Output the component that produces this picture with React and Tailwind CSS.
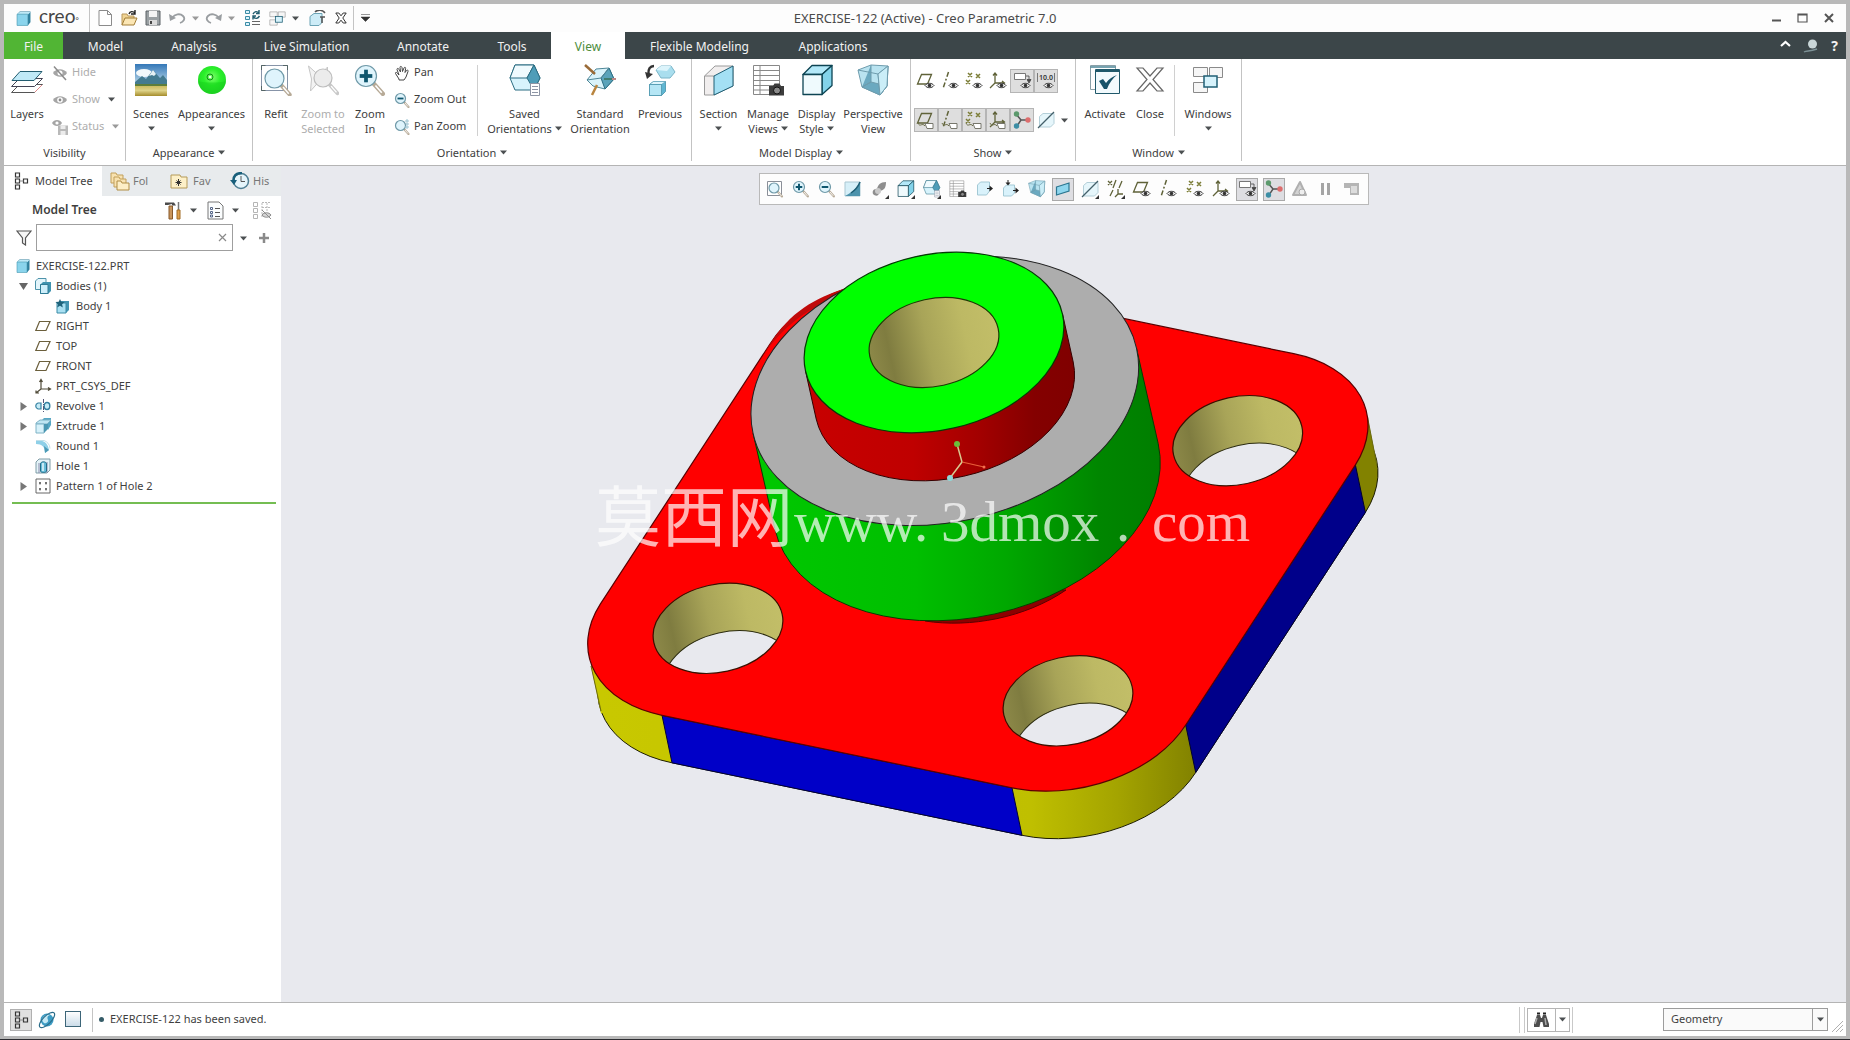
import React from "react";

/* ---------- shared helpers ---------- */

function Svg({ w = 20, h, vb, children }) {
  const hh = h || w;
  return (
    <svg width={w} height={hh} viewBox={vb || `0 0 ${w} ${hh}`} fill="none" className="block shrink-0" aria-hidden="true">
      {children}
    </svg>
  );
}

function Caret({ light }) {
  return (
    <svg width="7" height="5" viewBox="0 0 7 5" className="inline-block shrink-0" aria-hidden="true">
      <path d="M0 .5h7L3.5 4.5z" fill={light ? "#9a9a9a" : "#4c5052"} />
    </svg>
  );
}

const Eye = ({ x = 9, y = 11 }) => (
  <g transform={`translate(${x} ${y})`}>
    <path d="M0 3.5C2 .6 7 .6 9 3.5 7 6.4 2 6.4 0 3.5z" fill="#fff" stroke="#333" />
    <circle cx="4.5" cy="3.5" r="1.8" fill="#333" />
  </g>
);

const Tag = () => (
  <g>
    <path d="M2 13c2 5 4-1 7 3" stroke="#6d6f48" />
    <path d="M9 13.500h8v5H11z" fill="#fff" stroke="#77776c" />
  </g>
);

const Corner = () => <path d="M19 16v4h-4z" fill="#333" />;

/* ---------- small datum icons ---------- */

const olive = "#5f6238";
const PlaneShape = () => <path d="M5.500 3.500h10l-4 9.500h-10z" stroke={olive} strokeWidth="1.300" />;
const AxisShape = () => <path d="M8.500 1L3 17.500" stroke={olive} strokeWidth="1.500" strokeDasharray="5 2 2 2" />;
const PointsShape = () => (
  <path d="M4 2l4 4m0-4L4 6M12 3l4 4m0-4l-4 4M2 9l4 4m0-4l-4 4" stroke="#7b7d36" strokeWidth="1.500" />
);
const CsysShape = () => (
  <path d="M7 2v10h9M7 12l-5 5M5 4.500L7 2l2 2.500M14 10l2.500 2-2.500 2" stroke={olive} strokeWidth="1.300" />
);

const PlaneEye = () => <Svg><PlaneShape /><Eye /></Svg>;
const AxisEye = () => <Svg><AxisShape /><Eye /></Svg>;
const PointsEye = () => <Svg><PointsShape /><Eye /></Svg>;
const CsysEye = () => <Svg><CsysShape /><Eye /></Svg>;
const PlaneTag = () => <Svg><PlaneShape /><Tag /></Svg>;
const AxisTag = () => <Svg><AxisShape /><Tag /></Svg>;
const PointsTag = () => <Svg><PointsShape /><Tag /></Svg>;
const CsysTag = () => <Svg><CsysShape /><Tag /></Svg>;
const NoteEye = () => (
  <Svg>
    <path d="M2.500 2.500h11v6h-11z" fill="#fff" stroke="#777" />
    <path d="M14 5h3v3.500M15 8.500h4L17 12z" stroke="#444" strokeWidth=".8" />
    <path d="M15 8.500h4L17 12z" fill="#444" />
    <Eye />
  </Svg>
);
const DimEye = () => (
  <Svg>
    <path d="M1.500 2v9M18.500 2v9" stroke="#777" />
    <text x="10" y="9" textAnchor="middle" fontSize="7" fontWeight="600" fill="#333">10.0</text>
    <Eye x={8} />
  </Svg>
);
const Spin = () => (
  <Svg>
    <path d="M4 4l5 6 7 0M9 10l-4 6" stroke="#555" strokeWidth="1.500" />
    <circle cx="4.500" cy="4" r="2.700" fill="#5c9a6d" />
    <circle cx="16" cy="10" r="2.700" fill="#dd6d6d" />
    <circle cx="4.500" cy="16" r="2.700" fill="#3c8ea5" />
  </Svg>
);
const SectionLine = ({ corner }) => (
  <Svg>
    <path d="M3.500 6.500L7 3.500h11v10l-3.500 3.500h-11z" fill="#e6f6fb" stroke="#b4cfd8" />
    <path d="M2 18L18 2" stroke="#44606a" strokeWidth="1.300" />
    {corner && <Corner />}
  </Svg>
);

/* ---------- view icons ---------- */

const Lens = ({ x, y, r, sign, gray }) => (
  <g>
    <path d={`M${x + r * 0.7} ${y + r * 0.7}l${r * 0.9} ${r}`} stroke={gray ? "#c8c8c8" : "#b7aa97"} strokeWidth={r * 0.42} strokeLinecap="round" />
    <path d={`M${x + r * 0.9} ${y + r * 0.9}l${r * 0.6} ${r * 0.7}`} stroke="#fff" strokeWidth={r * 0.16} />
    <circle cx={x} cy={y} r={r} fill={gray ? "#ececec" : "#dff4fc"} stroke={gray ? "#bdbdbd" : "#6f99a8"} strokeWidth="1.200" />
    {sign && <path d={`M${x - r * 0.6} ${y}h${r * 1.2}`} stroke="#0e566e" strokeWidth={r * 0.36} />}
    {sign === "+" && <path d={`M${x} ${y - r * 0.6}v${r * 1.2}`} stroke="#0e566e" strokeWidth={r * 0.36} />}
  </g>
);

const RefitBig = () => (
  <Svg w={32}>
    <rect x="1.500" y="1.500" width="26" height="25" fill="#fff" stroke="#8794a8" />
    <path d="M1.500 6v-4.500h4M23 1.500h4.500V6M1.500 22v4.500h4" stroke="#566" />
    <Lens x={14.500} y={14.500} r={9.500} />
  </Svg>
);
const ZoomSelBig = () => (
  <Svg w={32}>
    <path d="M1.500 2l11 10 8-9v18l-8-4-9 10 1-12z" fill="#f3f3f3" stroke="#c6c6c6" />
    <Lens x={16} y={14} r={9} gray />
  </Svg>
);
const ZoomInBig = () => (
  <Svg w={32}>
    <Lens x={12} y={12} r={10.500} sign="+" />
  </Svg>
);
const ZoomSmall = ({ sign }) => (
  <Svg w={16}>
    <Lens x={6.500} y={6.500} r={5} sign={sign} />
  </Svg>
);
const PanZoomIcon = () => (
  <Svg w={16}>
    <Lens x={6.500} y={6.500} r={5} />
    <path d="M11 2h4M12 5h3M11 8h4M13 0v10" stroke="#9cc4d2" />
  </Svg>
);
const HandIcon = () => (
  <Svg w={16}>
    <path d="M5 14L1.500 8.500c-.5-1.500 1.500-1.500 2 0L5 10 3 4.500c0-1.500 1.500-1.500 2 0L6.500 7 6 2.500c0-1.500 1.500-1.500 2 0L8.500 6.500 10 3c.5-1.300 1.900-.8 1.600.5L11 7.500l1.500-2c1-1 2 0 1.500 1L12 12l-2 3H5z" stroke="#444" fill="#fff" />
  </Svg>
);
const LayersBig = () => (
  <Svg w={32}>
    <path d="M8.500 20.500h23l-8 8h-23z" fill="#fff" stroke="#555" />
    <path d="M24 28l7-7" stroke="#d88" />
    <path d="M8.500 14.500h23l-8 8h-23z" fill="#fff" stroke="#445" />
    <path d="M9 7.500h22l-8 9H1z" fill="#bfe9f7" stroke="#235d70" />
  </Svg>
);
const HideIcon = () => (
  <Svg w={16}>
    <path d="M1 8c3-5 11-5 14 0-3 5-11 5-14 0z" fill="#a5a5a5" />
    <circle cx="8" cy="8" r="2.500" fill="#fff" />
    <path d="M2 1.500L14 15" stroke="#8c8c8c" strokeWidth="1.500" />
  </Svg>
);
const ShowIcon = () => (
  <Svg w={16}>
    <path d="M1 8c3-5 11-5 14 0-3 5-11 5-14 0z" fill="#a5a5a5" />
    <circle cx="8" cy="8" r="2.800" fill="#fff" />
    <circle cx="8" cy="8" r="1.400" fill="#8a8a8a" />
  </Svg>
);
const StatusIcon = () => (
  <Svg w={16}>
    <path d="M0 4c2-4 8-4 10 0-2 4-8 4-10 0z" fill="#a5a5a5" />
    <circle cx="5" cy="4" r="1.600" fill="#fff" />
    <path d="M6 6.500h10V16H6z" fill="#b9b9b9" />
    <path d="M8.500 6.500h5V10h-5zM8.500 12h5v4h-5z" fill="#ececec" />
  </Svg>
);
const ScenesBig = () => (
  <Svg w={32}>
    <defs>
      <linearGradient id="sky" x1="0" y1="0" x2="0" y2="1">
        <stop offset="0" stopColor="#3478b8" />
        <stop offset="1" stopColor="#c9e2ee" />
      </linearGradient>
      <linearGradient id="field" x1="0" y1="0" x2="0" y2="1">
        <stop offset="0" stopColor="#c9b755" />
        <stop offset=".5" stopColor="#ded389" />
        <stop offset="1" stopColor="#a58c2c" />
      </linearGradient>
    </defs>
    <rect width="32" height="22" fill="url(#sky)" />
    <ellipse cx="9" cy="9" rx="8" ry="4" fill="#f2f8fb" />
    <path d="M0 18l7-6 4 3 7-9 7 8 3-3 4 5v6H0z" fill="#447b90" />
    <path d="M18 6l-4 6 3-1 2 1 2-2z" fill="#e6f1f4" />
    <rect y="21" width="32" height="11" fill="url(#field)" />
    <path d="M0 20h32v2H0z" fill="#5e7e3a" />
  </Svg>
);
const AppearBig = () => (
  <Svg w={32}>
    <defs>
      <radialGradient id="ball" cx=".5" cy=".4" r=".6">
        <stop offset="0" stopColor="#7dff6a" />
        <stop offset=".5" stopColor="#2af02a" />
        <stop offset="1" stopColor="#22d628" />
      </radialGradient>
    </defs>
    <circle cx="16" cy="16" r="14" fill="url(#ball)" />
    <path d="M2 17c7 2 21 2 28 0-1 8-7 13-14 13S3 25 2 17z" fill="#12c916" opacity=".4" />
    <circle cx="14" cy="13" r="3" stroke="#128c1a" />
    <circle cx="14" cy="13" r="1.300" fill="#eaffea" />
  </Svg>
);
const SavedShape = () => (
  <g strokeLinejoin="round">
    <path d="M6 1h19l6 13-6 12H6L1 14z" fill="#d7f3fc" stroke="#2b6d82" />
    <path d="M6 1h19l-7 13H1z" fill="#effafe" stroke="#2b6d82" />
    <path d="M25 1l6 13-6 12-7-12z" fill="#4f9db8" stroke="#2b6d82" />
    <rect x="21.500" y="19.500" width="9" height="12" fill="#fff" stroke="#8d95a5" />
    <path d="M23 22.500h6M23 25.500h6M23 28.500h6" stroke="#8d95a5" />
  </g>
);
const SavedBig = () => <Svg w={32}><SavedShape /></Svg>;
const StandardBig = () => (
  <Svg w={32}>
    <path d="M3 16l9-11 13-1 5 11-9 10-12-3z" fill="#d9f3fb" stroke="#4f8798" />
    <path d="M25 4l5 11-9 10-4-11z" fill="#5aa3ba" stroke="#2b6d82" />
    <path d="M3 16l14-2 8-10" stroke="#4f8798" />
    <path d="M1 1l10 9" stroke="#9a6b38" strokeWidth="2.500" />
    <path d="M13 21L8 31" stroke="#b9853f" strokeWidth="2.500" />
    <path d="M20 15h9" stroke="#3f7d70" strokeWidth="2" />
    <path d="M28 15h4" stroke="#b88" strokeWidth="2" />
  </Svg>
);
const PreviousBig = () => (
  <Svg w={32}>
    <path d="M10 2C6 2 4 5 4.500 10" stroke="#333" strokeWidth="2.500" />
    <path d="M1 8l2 7 6-5z" fill="#333" />
    <path d="M12 6l5-4 10 0 4 6-5 6-9 0z" fill="#a9deee" stroke="#7ab5c8" />
    <path d="M12 6l5-4 10 0-4 5z" fill="#dcf4fb" />
    <path d="M5.500 20.500l4-3h12v10l-4 4h-12z" fill="#5fb6d2" stroke="#5aa0b6" />
    <path d="M5.500 20.500l4-3h12l-4 3z" fill="#def5fc" stroke="#5aa0b6" strokeWidth=".6" />
    <rect x="5.500" y="20.500" width="12" height="11" fill="#b5e6f5" stroke="#5aa0b6" />
  </Svg>
);
const SectionBig = () => (
  <Svg w={32}>
    <path d="M1.500 12L12 2l18 0v20L11 31H1.500z" fill="#f1eeee" stroke="#9a9a9a" />
    <path d="M1.500 12H11" stroke="#9a9a9a" />
    <path d="M11 12l19-10v20L11 31z" fill="#a4e0f4" stroke="#1f5f75" />
  </Svg>
);
const CamShape = () => (
  <g>
    <path d="M17 22h4l1.500-2.500h5L29 22h3v9.500H17z" fill="#3c3c3c" />
    <circle cx="25" cy="26.500" r="3.500" fill="#8b8b8b" stroke="#111" />
  </g>
);
const ManageShape = () => (
  <g>
    <path d="M1.500 1.500h26v29h-26z" fill="#fff" stroke="#888" />
    <path d="M8 1.500v29M1.500 6.500h26M1.500 11.500h26M1.500 16.500h26M1.500 21.500h26M1.500 26h26" stroke="#888" />
    <CamShape />
  </g>
);
const ManageBig = () => <Svg w={32}><ManageShape /></Svg>;
const BoxShape = () => (
  <g strokeLinejoin="round">
    <path d="M2 10.500L11 1.500h20L21 10.500z" fill="#b3e8f8" stroke="#0d4453" strokeWidth="1.300" />
    <path d="M21 10.500l10-9v20l-10 9z" fill="#83d3ea" stroke="#0d4453" strokeWidth="1.300" />
    <path d="M2 10.500h19v20H2z" fill="#effafd" stroke="#0d4453" strokeWidth="1.300" />
  </g>
);
const DisplayBig = () => <Svg w={32}><BoxShape /></Svg>;
const PerspShape = () => (
  <g>
    <path d="M1 6l13-5 17 1-1 20-7 9-18-8z" fill="#b9e3f0" stroke="#6e9cad" />
    <path d="M14 1v17L5 23M14 18l16 4-7 9-18-8z" fill="#6ba9c0" stroke="#6e9cad" />
    <path d="M1 6l20 4 10-8-1 20-7 9-2-21" stroke="#6e9cad" />
    <path d="M21 10l10-8-1 20-7 9z" fill="#cbeef8" stroke="#6e9cad" />
  </g>
);
const PerspBig = () => <Svg w={32}><PerspShape /></Svg>;
const ActivateBig = () => (
  <Svg w={32}>
    <path d="M1.500 1.500h25v24h-25z" fill="#fff" stroke="#8aa0a8" />
    <path d="M1.500 3h25" stroke="#4a8496" strokeWidth="1.500" />
    <path d="M6.500 5.500h24v24h-24z" fill="#f2fafd" stroke="#20596b" />
    <path d="M6.500 7h24" stroke="#20596b" strokeWidth="2" />
    <path d="M10 17l4-2 3 4c3-4 6-6 11-8-4 3-8 8-10 14h-3z" fill="#17536a" />
  </Svg>
);
const CloseBig = () => (
  <Svg w={32}>
    <path d="M3 4h6l7 8 7-8h6L19 15.500 29 27h-6l-7-8-7 8H3l10-11.500z" fill="#fff" stroke="#666" strokeWidth="1.200" />
  </Svg>
);
const WindowsShape = () => (
  <g>
    <path d="M1.500 3.500h14v9h-14zM17.500 3.500h13v10h-13zM1.500 18.500h14v10h-14z" fill="#f6f6f6" stroke="#8a8a8a" />
    <rect x="12" y="12" width="13" height="11" fill="#d6f2fb" stroke="#1f5f75" strokeWidth="1.500" />
  </g>
);
const WindowsBig = () => <Svg w={32}><WindowsShape /></Svg>;

/* ---------- title bar icons ---------- */

const CubeIcon = ({ s = 14 }) => (
  <Svg w={s} vb="0 0 14 14">
    <path d="M1 3l2.500-2.500h10v10L11 13.500V3z" fill="#2f7f9c" />
    <path d="M1 3l2.500-2h10L11 3.500z" fill="#bfeaf7" />
    <path d="M1 3h10v10.500H1z" fill="#8ad4ec" stroke="#4597b1" strokeWidth=".6" />
  </Svg>
);
const NewIcon = () => (
  <Svg w={16}>
    <path d="M2 .5h8.500l4 4v11H2z" fill="#fff" stroke="#8b8b8b" />
    <path d="M10.500.5v4h4" stroke="#8b8b8b" />
  </Svg>
);
const OpenIcon = () => (
  <Svg w={17} h={17}>
    <path d="M1 15V4h5l1 2h6v3" fill="#f0d494" stroke="#b9975a" />
    <path d="M1 15l3-7h12l-3 7z" fill="#fbe6b4" stroke="#a17d36" />
    <path d="M8 4c1-3 4-3 6-1M14 0v4h-4" stroke="#222" strokeWidth="1.400" />
  </Svg>
);
const SaveIcon = () => (
  <Svg w={16}>
    <path d="M1 1h14v14H1z" fill="#9aa0a3" stroke="#5d6366" />
    <path d="M4 1h8v6H4z" fill="#f4f4f4" />
    <path d="M4 10h8v5H4z" fill="#dadada" />
    <path d="M6 11v3" stroke="#444" strokeWidth="2" />
  </Svg>
);
const UndoIcon = ({ flip }) => (
  <svg width="17" height="12" viewBox="0 0 17 12" fill="none" className={flip ? "-scale-x-100" : ""} aria-hidden="true">
    <path d="M3 6c3-4 8-5 11-2s0 6-3 7" stroke="#9a9ea1" strokeWidth="1.800" />
    <path d="M0 2l1 7 6-3z" fill="#9a9ea1" />
  </svg>
);
const RegenIcon = () => (
  <Svg w={16}>
    <path d="M.5.500h4v3h-4zM.5 6.500h4v3h-4zM.5 12.500h4v3h-4z" fill="#d9f2fb" stroke="#3a8ba5" />
    <path d="M7 11.500h8M7 14.500h8" stroke="#666" />
    <path d="M8 4c2-3 4-3 6-1M14 0v3.500h-3M14.500 6c-2 3-4 3-6 1M8 9.500V6h3" stroke="#225e70" strokeWidth="1.400" />
  </Svg>
);
const CloseCube = () => (
  <Svg w={17} h={16}>
    <path d="M1 6.500l4-3h8v9l-3 3H1z" fill="#cdecf7" stroke="#6ba3b5" />
    <path d="M6 2c3-3 8-2 10 1M16 7h-5M13 7v6" stroke="#555" strokeWidth="1.500" />
  </Svg>
);
const XSmall = () => (
  <Svg w={12}>
    <path d="M.8 1h3L6 3.800 8.200 1h3L7.800 6l3.400 5h-3L6 8.200 3.800 11h-3L4.200 6z" stroke="#333" />
  </Svg>
);

function TitleBar() {
  const ib = "flex h-5 w-6 items-center justify-center";
  const cb = "flex h-5 w-3 items-center justify-center";
  return (
    <header className="grid h-7 grid-cols-[1fr_auto_1fr] items-center bg-[#fdfdfd]">
      <div className="flex items-center">
        <span className="flex w-[86px] shrink-0 items-center gap-2 border-r border-[#c4c4c4] pl-3">
          <CubeIcon s={15} />
          <span className="font-['Lato',sans-serif] text-[19px] leading-6 text-[#454545]">creo<span className="text-[8px]">°</span></span>
        </span>
        <span className="flex items-center pl-[3px]">
          <button className={ib} aria-label="New"><NewIcon /></button>
          <button className={ib} aria-label="Open"><OpenIcon /></button>
          <button className={ib} aria-label="Save"><SaveIcon /></button>
          <button className={ib} aria-label="Undo"><UndoIcon /></button>
          <button className={cb} aria-label="Undo list"><Caret light /></button>
          <button className={ib} aria-label="Redo"><UndoIcon flip /></button>
          <button className={cb} aria-label="Redo list"><Caret light /></button>
          <button className="ml-1 flex h-5 w-6 items-center justify-center" aria-label="Regenerate"><RegenIcon /></button>
          <button className={ib} aria-label="Windows"><Svg w={17} vb="0 0 32 32"><WindowsShape /></Svg></button>
          <button className={cb} aria-label="Windows list"><Caret /></button>
          <button className="ml-1 flex h-5 w-6 items-center justify-center" aria-label="Erase"><CloseCube /></button>
          <button className={ib} aria-label="Close model"><XSmall /></button>
          <button className="flex h-6 w-6 items-center justify-center border-l border-[#c4c4c4]" aria-label="Customize"><Svg w={9} h={8}><path d="M0 .5h9M0 3h9L4.500 7.500z" stroke="#333" strokeWidth=".5" fill="#333" /></Svg></button>
        </span>
      </div>
      <h1 className="text-[13px] leading-5 text-[#4a4a4a]">EXERCISE-122 (Active) - Creo Parametric 7.0</h1>
      <div className="flex items-center justify-end gap-4 pr-3">
        <button aria-label="Minimize"><Svg w={10}><path d="M1 7.500h9" stroke="#555" strokeWidth="2" /></Svg></button>
        <button aria-label="Maximize"><Svg w={11} h={10}><path d="M1 1h9v8H1zM1 2h9" stroke="#555" strokeWidth="1.200" /></Svg></button>
        <button aria-label="Close"><Svg w={10}><path d="M1 1l8 8M9 1L1 9" stroke="#555" strokeWidth="2" /></Svg></button>
      </div>
    </header>
  );
}

const TABS = [
  ["Model", "w-[85px]"],
  ["Analysis", "w-[92px]"],
  ["Live Simulation", "w-[133px]"],
  ["Annotate", "w-[100px]"],
  ["Tools", "w-[78px]"],
  ["View", "w-[74px]"],
  ["Flexible Modeling", "w-[149px]"],
  ["Applications", "w-[118px]"],
];

function TabBar() {
  return (
    <nav className="flex h-[27px] items-stretch bg-[#3c4649] text-[12px] text-[#f2f2f2]">
      <button className="w-[59px] bg-[#51b534] pt-[2px]">File</button>
      {TABS.map(([t, w]) => (
        <button key={t} className={`${w} whitespace-nowrap pt-[2px] ${t === "View" ? "bg-white text-[#4d8d3c]" : ""}`}>{t}</button>
      ))}
      <div className="ml-auto flex items-center gap-3 pr-2">
        <button aria-label="Collapse ribbon"><Svg w={11} h={12}><path d="M1 6l4.500-4L10 6" stroke="#fff" strokeWidth="2.200" /></Svg></button>
        <button aria-label="Search"><Svg w={16} h={14}><circle cx="9.500" cy="5" r="4.500" fill="#c9d6d8" /><path d="M1 13c3-2 5 0 13-3" stroke="#7d9297" strokeWidth="1.500" /></Svg></button>
        <button className="text-[14px] font-bold" aria-label="Help">?</button>
      </div>
    </nav>
  );
}

/* ---------- ribbon ---------- */

function Big({ icon, l1, l2, caret, w, off }) {
  return (
    <button className={`flex ${w} shrink-0 flex-col items-center whitespace-nowrap pt-[5px] ${off ? "text-[#adadad]" : ""}`}>
      {icon}
      <span className="mt-[10px] leading-[15px]">{l1}</span>
      <span className="flex h-[15px] items-center gap-[3px] leading-[15px]">
        {l2}
        {caret && <Caret />}
      </span>
    </button>
  );
}

function Small({ icon, label, caret, off }) {
  return (
    <button className={`flex h-[27px] items-center gap-1 whitespace-nowrap ${off ? "text-[#adadad]" : ""}`}>
      {icon}
      <span>{label}</span>
      {caret && <span className="flex pl-1"><Caret light={caret === "light"} /></span>}
    </button>
  );
}

function Group({ label, caret, w, children }) {
  return (
    <section className={`${w} flex h-full shrink-0 flex-col pb-1`}>
      <div className="flex h-full flex-col border-r border-[#c3c3c3]">
        <div className="flex h-[84px]">{children}</div>
        <div className="flex flex-1 items-center justify-center gap-1 pt-[3px]">
          {label}
          {caret && <Caret />}
        </div>
      </div>
    </section>
  );
}

function Cell({ on, label, children }) {
  return (
    <button aria-label={label} className={`flex h-6 w-6 items-center justify-center ${on ? "border border-[#b5b5b5] bg-[#dedede]" : ""}`}>
      {children}
    </button>
  );
}

const Sep = () => <div className="my-[6px] w-px shrink-0 bg-[#d0d0d0]" />;

function Ribbon() {
  return (
    <div className="flex h-[107px] border-b border-[#b4b4b4] bg-white text-[11px] text-[#3d3d3d]">
      <Group label="Visibility" w="w-[122px]">
        <Big w="w-[46px]" icon={<LayersBig />} l1="Layers" />
        <div className="flex flex-col pl-[2px]">
          <Small off icon={<HideIcon />} label="Hide" />
          <Small off icon={<ShowIcon />} label="Show" caret="dark" />
          <Small off icon={<StatusIcon />} label="Status" caret="light" />
        </div>
      </Group>
      <Group label="Appearance" caret w="w-[127px]">
        <Big w="w-[50px]" icon={<ScenesBig />} l1="Scenes" caret />
        <Big w="w-[71px]" icon={<AppearBig />} l1="Appearances" caret />
      </Group>
      <Group label="Orientation" caret w="w-[439px]">
        <Big w="w-[46px]" icon={<RefitBig />} l1="Refit" />
        <Big w="w-[48px]" off icon={<ZoomSelBig />} l1="Zoom to" l2="Selected" />
        <Big w="w-[46px]" icon={<ZoomInBig />} l1="Zoom" l2="In" />
        <div className="flex w-[85px] flex-col pl-[1px]">
          <Small icon={<HandIcon />} label="Pan" />
          <Small icon={<ZoomSmall sign="-" />} label="Zoom Out" />
          <Small icon={<PanZoomIcon />} label="Pan Zoom" />
        </div>
        <Sep />
        <Big w="w-[93px]" icon={<SavedBig />} l1="Saved" l2="Orientations" caret />
        <Big w="w-[58px]" icon={<StandardBig />} l1="Standard" l2="Orientation" />
        <Big w="w-[62px]" icon={<PreviousBig />} l1="Previous" />
      </Group>
      <Group label="Model Display" caret w="w-[219px]">
        <Big w="w-[53px]" icon={<SectionBig />} l1="Section" caret />
        <Big w="w-[46px]" icon={<ManageBig />} l1="Manage" l2="Views" caret />
        <Big w="w-[51px]" icon={<DisplayBig />} l1="Display" l2="Style" caret />
        <Big w="w-[62px]" icon={<PerspBig />} l1="Perspective" l2="View" />
      </Group>
      <Group label="Show" caret w="w-[165px]">
        <div className="flex flex-col gap-[15px] pl-[3px] pt-[10px]">
          <div className="flex">
            <Cell label="Plane display"><PlaneEye /></Cell>
            <Cell label="Axis display"><AxisEye /></Cell>
            <Cell label="Point display"><PointsEye /></Cell>
            <Cell label="Csys display"><CsysEye /></Cell>
            <Cell on label="Annotation display"><NoteEye /></Cell>
            <Cell on label="Dimension display"><DimEye /></Cell>
          </div>
          <div className="flex items-center">
            <Cell on label="Plane tags"><PlaneTag /></Cell>
            <Cell on label="Axis tags"><AxisTag /></Cell>
            <Cell on label="Point tags"><PointsTag /></Cell>
            <Cell on label="Csys tags"><CsysTag /></Cell>
            <Cell on label="Spin center"><Spin /></Cell>
            <Cell label="Section line"><SectionLine /></Cell>
            <button className="pl-[3px]" aria-label="More"><Caret /></button>
          </div>
        </div>
      </Group>
      <Group label="Window" caret w="w-[166px]">
        <Big w="w-[58px]" icon={<ActivateBig />} l1="Activate" />
        <Big w="w-[32px]" icon={<CloseBig />} l1="Close" />
        <div className="w-[9px]" />
        <Sep />
        <Big w="w-[66px]" icon={<WindowsBig />} l1="Windows" caret />
      </Group>
    </div>
  );
}

/* ---------- model tree ---------- */

const TreeTabIcon = () => (
  <Svg w={15} h={18}>
    <path d="M1.500 1h4v4h-4zM1.500 7h4v4h-4zM1.500 13h4v4h-4zM9.500 7h4v4h-4z" stroke="#333" strokeWidth="1.200" />
    <path d="M3.500 5v2M3.500 11v2M5.500 9h4" stroke="#888" />
  </Svg>
);
const FoldersIcon = () => (
  <Svg w={20} h={19}>
    <path d="M1 1h5l1 2h6v8H1z" fill="#f8e2b0" stroke="#c19f5a" />
    <path d="M4 5h5l1 2h6v8H4z" fill="#f8e2b0" stroke="#c19f5a" />
    <path d="M7 9h4l1 2h7v7H7z" fill="#fdeec6" stroke="#b08d45" />
  </Svg>
);
const FavIcon = () => (
  <Svg w={18} h={17}>
    <path d="M1 2h9l1 2h6v11H1z" fill="#fdf0c8" stroke="#b59a58" />
    <path d="M8.500 6v7M5.500 9.500h6M6.500 7.500l4 4M10.500 7.500l-4 4" stroke="#333" />
  </Svg>
);
const HistIcon = () => (
  <Svg w={20} h={18}>
    <circle cx="11" cy="9" r="7.500" fill="#e6f5fb" stroke="#4e7e93" strokeWidth="1.500" />
    <path d="M11 4v5.500h4" stroke="#555" />
    <path d="M12 1C6 1 3 4 3.500 9.500" stroke="#185f7b" strokeWidth="2.500" />
    <path d="M0 8h7l-3 5z" fill="#185f7b" />
  </Svg>
);
const ToolsIcon = () => (
  <Svg w={18} h={19}>
    <path d="M1 1.500h9l2 3H8V3L4 4H1z" fill="#4b4b4b" />
    <path d="M5 5h3.500v13H5z" fill="#c9955b" stroke="#87592a" />
    <path d="M14.500 1v8" stroke="#777" strokeWidth="1.500" />
    <path d="M13 9h3v9h-3z" fill="#e0a04c" stroke="#a16d24" />
  </Svg>
);
const ListIcon = () => (
  <Svg w={17} h={19}>
    <path d="M1 1h11l4 4v13H1z" fill="#fbfdfe" stroke="#777" />
    <path d="M3.500 6.500h2v2h-2zM3.500 10.500h2v2h-2zM3.500 14h2v2h-2z" stroke="#568" />
    <path d="M8 7.500h5M8 11.500h5M8 15.500h5" stroke="#555" />
  </Svg>
);
const GridHide = () => (
  <Svg w={20} h={19}>
    <path d="M1.500 1.500h4v4h-4zM1.500 7.500h4v4h-4zM1.500 13.500h4v4h-4z" stroke="#b5b5b5" />
    <path d="M10 2v14M10 1.500h9M10 6.500h9M15 2v8" stroke="#b9b9b9" strokeDasharray="2 1" />
    <path d="M10 14c2-3 7-3 9 0-2 3-7 3-9 0zM10 9l9 9" stroke="#8d8d8d" fill="#d5d5d5" />
  </Svg>
);
const BodiesIcon = () => (
  <Svg w={16}>
    <path d="M.5 3L3 .5h8V9L8.500 11.500h-8z" fill="#e3f5fb" stroke="#4e93aa" />
    <path d="M5 7l3-3h8v9l-3 3H5z" fill="#3f93af" />
    <path d="M5.500 6.500h7.500v9H5.500z" fill="#cdeefa" stroke="#2f7b95" />
  </Svg>
);
const BodyIcon = () => (
  <Svg w={15} h={15}>
    <path d="M2 5l3-3h9v9l-3 3H2z" fill="#4295b2" />
    <path d="M2 4h9v10H2z" fill="#a9e0f2" stroke="#3b8ba6" />
    <path d="M5 0l1.300 2.800 3.200.3-2.400 2.100.7 3.200L5 6.700 2.200 8.400l.7-3.200L.5 3.100l3.200-.3z" fill="#1f637b" />
  </Svg>
);
const PlaneIcon = () => (
  <Svg w={16} h={12}>
    <path d="M4.500 1.500h10.500l-4 9H.8z" stroke="#6b5f3c" strokeWidth="1.200" />
  </Svg>
);
const CsysIcon = () => (
  <Svg w={17} h={17}>
    <path d="M6 2v9h9M6 11l-5 4M4.500 4L6 1.500 7.500 4M13 9.500l2.500 1.500-2.500 1.500M1 12.500V15h3" stroke="#4f4a38" strokeWidth="1.200" />
  </Svg>
);
const RevolveIcon = () => (
  <Svg w={16}>
    <path d="M6 5H3C0 6 0 10 3 11h3z" fill="#c5ebf7" stroke="#3480a0" strokeWidth="1.200" />
    <ellipse cx="12" cy="8" rx="2.800" ry="3.500" fill="#c5ebf7" stroke="#3480a0" strokeWidth="1.400" />
    <path d="M8.500 1v14" stroke="#557" strokeDasharray="4 1 1 1" />
  </Svg>
);
const ExtrudeIcon = () => (
  <Svg w={16}>
    <path d="M6 3l3-3h7v7l-3 5V4z" fill="#56a7c4" />
    <path d="M1 5l4-3h11l-4 4H1z" fill="#bfe6f3" stroke="#7fb3c6" />
    <path d="M1 6h8v9H1z" fill="#d7f1fa" stroke="#7fb3c6" />
    <path d="M9 6h4v5l-4 4z" fill="#4a97b2" />
  </Svg>
);
const RoundIcon = () => (
  <Svg w={16}>
    <path d="M1 3c7-2 12 2 13 9l-4 3C10 9 7 6 1 6z" fill="#8fd0e8" />
    <path d="M1 2.500h8c3 1 6 4 6 8" stroke="#c1dfe9" />
    <path d="M9 8l5 4-4 3z" fill="#4c9ab6" />
  </Svg>
);
const HoleIcon = () => (
  <Svg w={16}>
    <path d="M1 4l3-3h11v11l-3 3H1z" fill="#e4f3f8" stroke="#7f9ca6" />
    <path d="M4 5v10M12 4v11" stroke="#88a" />
    <path d="M5.500 6c0-3 6-3 6 0v7c0 2-6 2-6 0z" fill="#67bcd9" stroke="#236d88" />
    <path d="M8 5v8" stroke="#e9f8fd" strokeWidth="1.500" />
  </Svg>
);
const PatternIcon = () => (
  <Svg w={16}>
    <path d="M1 1h14v14H1z" fill="#fff" stroke="#666" />
    <path d="M4 5h2M10 5h2M4 11h2M10 11h2M5 4v2.500M11 4v2.500M5 10v2.500M11 10v2.500" stroke="#444" />
  </Svg>
);
const Twist = ({ open }) => (
  <Svg w={9} h={9}>
    {open ? <path d="M0 1h9L4.500 8z" fill="#666" /> : <path d="M1.500 0v9L8 4.500z" fill="#777" />}
  </Svg>
);

const TREE = [
  ["Bodies (1)", BodiesIcon, "open"],
  ["Body 1", BodyIcon, "", true],
  ["RIGHT", PlaneIcon],
  ["TOP", PlaneIcon],
  ["FRONT", PlaneIcon],
  ["PRT_CSYS_DEF", CsysIcon],
  ["Revolve 1", RevolveIcon, "closed"],
  ["Extrude 1", ExtrudeIcon, "closed"],
  ["Round 1", RoundIcon],
  ["Hole 1", HoleIcon],
  ["Pattern 1 of Hole 2", PatternIcon, "closed"],
];

function SidePanel() {
  const tab = "flex h-[30px] shrink-0 items-center whitespace-nowrap";
  return (
    <aside className="flex w-[277px] shrink-0 flex-col bg-white text-[11px] text-[#3f3f3f]">
      <div className="flex bg-[#e8ebed]">
        <button className={`${tab} w-[98px] gap-[6px] bg-white pl-[10px]`}><TreeTabIcon />Model Tree</button>
        <button className={`${tab} w-[60px] gap-[3px] pl-2 text-[#777]`}><FoldersIcon />Fol</button>
        <button className={`${tab} w-[60px] gap-[5px] pl-2 text-[#777]`}><FavIcon />Fav</button>
        <button className={`${tab} w-[52px] gap-[3px] pl-2 text-[#777]`}><HistIcon />His</button>
      </div>
      <div className="flex h-7 items-center pl-7">
        <h2 className="flex-1 text-[12px] font-semibold">Model Tree</h2>
        <button aria-label="Tree settings"><ToolsIcon /></button>
        <button className="ml-2" aria-label="Settings list"><Caret /></button>
        <button className="ml-[10px]" aria-label="Tree show"><ListIcon /></button>
        <button className="ml-2" aria-label="Show list"><Caret /></button>
        <button className="ml-[13px] mr-[9px]" aria-label="Tree columns"><GridHide /></button>
      </div>
      <div className="flex h-[27px] items-center pl-3">
        <Svg w={16} h={16}><path d="M1 1h14L9.500 8v7l-3-2V8z" fill="#f5f5f5" stroke="#555" strokeWidth="1.200" /></Svg>
        <div className="ml-1 flex h-[27px] w-[197px] items-center border border-[#9f9f9f] bg-white">
          <input aria-label="Filter tree" className="h-full min-w-0 flex-1 px-1 outline-none" />
          <button className="mr-[5px]" aria-label="Clear filter"><Svg w={9}><path d="M1 1l7 7M8 1L1 8" stroke="#8a8a8a" strokeWidth="1.200" /></Svg></button>
        </div>
        <button className="ml-[7px]" aria-label="Filter list"><Caret /></button>
        <button className="ml-[11px]" aria-label="Add filter"><Svg w={12}><path d="M6 1v10M1 6h10" stroke="#8a8a8a" strokeWidth="2.500" /></Svg></button>
      </div>
      <ul className="pl-2 pr-[5px] pt-[5px]">
        <li className="flex h-5 items-center gap-[6px] pl-1"><CubeIcon s={14} />EXERCISE-122.PRT</li>
        {TREE.map(([name, Icon, tw, deep]) => (
          <li key={name} className={`flex h-5 items-center whitespace-nowrap ${deep ? "pl-[27px]" : "pl-[7px]"}`}>
            <span className="w-4 shrink-0">{tw && <Twist open={tw === "open"} />}</span>
            <span className="flex w-[21px] shrink-0 items-center"><Icon /></span>
            {name}
          </li>
        ))}
        <li className="mt-[6px] h-[2px] bg-[#74bd52]" />
      </ul>
    </aside>
  );
}

/* ---------- in-graphics toolbar ---------- */

const mini = (shape, corner) => (
  <Svg w={20} vb="0 0 20 20">
    <g transform="translate(1 1) scale(.54)">{shape}</g>
    {corner && <Corner />}
  </Svg>
);

const TOOLS = [
  ["Refit", <Svg><path d="M2.500 2.500h14v14h-14z" stroke="#8a8f98" fill="#fff" /><Lens x={9} y={9} r={5} /></Svg>],
  ["Zoom in", <Svg><Lens x={8} y={8} r={5.500} sign="+" /></Svg>],
  ["Zoom out", <Svg><Lens x={8} y={8} r={5.500} sign="-" /></Svg>],
  ["Repaint", <Svg><path d="M2 3h15v14H2z" fill="#d6eff8" stroke="#a9c7d2" /><path d="M17 3v14H2C8 14 13 10 17 3z" fill="#4d93ac" /><path d="M17 3C15 8 11 12 8 14" stroke="#1f5f75" strokeWidth="1.500" /></Svg>],
  ["Rendering", <Svg><path d="M3 15c-1-4 1-5 4-5 1-4 3-7 9-7 0 6-2 8-6 9-1 5-4 6-7 3z" fill="#8e8e8e" /><circle cx="8" cy="12" r="3" fill="#c9c9c9" /><Corner /></Svg>],
  ["Display style", mini(<BoxShape />, true)],
  ["Saved orientations", mini(<SavedShape />, true)],
  ["View manager", mini(<ManageShape />)],
  ["View normal", <Svg><path d="M2.500 6l3-3h9v9l-3 4h-9z" fill="#d9f2fb" stroke="#a3c9d5" /><path d="M12 9.500h3" stroke="#222" /><path d="M14.500 6.500l3.500 3-3.500 3z" fill="#222" /></Svg>],
  ["Previous view", <Svg><path d="M2.500 9l3-3h8v8l-3 3h-8z" fill="#d9f2fb" stroke="#a3c9d5" /><path d="M12 11.500h3M7 1v3" stroke="#222" /><path d="M14.500 8.500l3.500 3-3.500 3zM4.500 3.500h5L7 6.500z" fill="#222" /></Svg>],
  ["Perspective", mini(<PerspShape />)],
  ["Section", <Svg><path d="M3.500 8L16 4v8L3.500 16z" fill="#8ed6ee" stroke="#2b7690" strokeWidth="1.200" /></Svg>, true],
  ["Section line", <SectionLine corner />],
  ["Datum filters", <Svg><path d="M2 2l4 4m0-4L2 6M10 1l-3 8M16 2l-3 7M7 11l-3 6M12 10v5h5M12 15l-3 3" stroke={olive} strokeWidth="1.300" /><Corner /></Svg>],
  ["Planes", <PlaneEye />],
  ["Axes", <AxisEye />],
  ["Points", <PointsEye />],
  ["Coordinate systems", <CsysEye />],
  ["Annotations", <NoteEye />, true],
  ["Spin center", <Spin />, true],
  ["Simulate", <Svg><path d="M10 3l6 13H3z" fill="#d3d3d3" stroke="#b0b0b0" strokeWidth="2" strokeLinejoin="round" /><circle cx="12" cy="13" r="3" fill="#eee" stroke="#aaa" /></Svg>],
  ["Pause", <Svg><path d="M6.500 4v12M12.500 4v12" stroke="#a5a5a5" strokeWidth="3" /></Svg>],
  ["Stop", <Svg><path d="M2 4h15v12H8V9H2z" fill="#b5b5b5" /><path d="M9 7h6v7H9z" fill="#dcdcdc" /></Svg>],
];

function GraphicsToolbar() {
  return (
    <div className="relative flex h-8 w-[610px] items-center justify-between border border-[#b9b9b9] bg-[#fdfdfd] px-1">
      {TOOLS.map(([n, icon, on]) => (
        <button key={n} aria-label={n} className={`flex h-[23px] w-[22px] items-center justify-center ${on ? "border border-[#a9a9a9] bg-[#dedee2]" : ""}`}>
          {icon}
        </button>
      ))}
    </div>
  );
}

/* ---------- 3D part ---------- */

const PLATE =
  "M600.3 604.1L770 344A131.6 87.800 -12.500 0 1 943.7 281.2L1293.7 353.7A131.6 87.800 -12.500 0 1 1355.4 464.9L1185.7 725A131.6 87.800 -12.500 0 1 1012 787.8L662 715.3A131.6 87.800 -12.500 0 1 600.3 604.1Z";

function Disc({ x, y, r, ...rest }) {
  return <ellipse rx={r} ry={r * 0.667} transform={`translate(${x} ${y}) rotate(-12.5)`} {...rest} />;
}

const HOLES = [
  [1237.7, 440.7],
  [718, 628.3],
  [1068, 700.8],
];

function Grad({ id, x1, x2, stops }) {
  return (
    <linearGradient id={id} gradientUnits="userSpaceOnUse" x1={x1} x2={x2} y1="0" y2="0">
      {stops.map(([o, c]) => <stop key={o} offset={o} stopColor={c} />)}
    </linearGradient>
  );
}

const TAN = [[0, "#8c8848"], [0.15, "#7f7c40"], [0.45, "#a8a458"], [0.75, "#bdb964"], [1, "#c2be68"]];

function Part() {
  return (
    <svg className="absolute inset-0 h-full w-full" viewBox="281 166 1565 836" fill="none" role="img" aria-label="Flanged part">
      <defs>
        <Grad id="yl" x1={600} x2={1380} stops={[[0, "#c8c800"], [0.54, "#bfbf00"], [0.65, "#a4a400"], [0.75, "#828200"], [1, "#828200"]]} />
        <Grad id="gr" x1={753} x2={1160} stops={[[0, "#00c800"], [0.4, "#00bf00"], [0.62, "#00a800"], [0.85, "#008600"], [1, "#007e00"]]} />
        <Grad id="rd" x1={805} x2={1075} stops={[[0, "#c80000"], [0.4, "#bf0000"], [0.65, "#a20000"], [0.85, "#840000"], [1, "#800000"]]} />
        <Grad id="bore" x1={-65} x2={65} stops={TAN} />
        {HOLES.map(([x, y], i) => (
          <clipPath key={i} id={`hc${i}`}><Disc x={x} y={y} r={65.700} /></clipPath>
        ))}
      </defs>

      <path d={PLATE} transform="translate(10 47.500)" fill="url(#yl)" stroke="#1c1c00" />
      <path d="M591 666L601 713.500L1377 464L1367.500 417Z" fill="url(#yl)" />
      <path d="M591 666L601 711M1377 466L1367.500 417" stroke="#6a6a10" />
      <path d="M662 715.300L672 762.800L1022 835.300L1012 787.800Z" fill="#0000c8" stroke="#00003a" />
      <path d="M1185.700 725L1195.700 772.500L1365.400 512.400L1355.400 464.900Z" fill="#00008a" stroke="#000030" />
      <path d={PLATE} fill="#ff0000" stroke="#5a0000" strokeWidth="1.200" />

      {HOLES.map(([x, y], i) => (
        <g key={i}>
          <Disc x={x} y={y} r={65.700} fill="url(#bore)" />
          <g clipPath={`url(#hc${i})`}>
            <Disc x={x + 10} y={y + 47.500} r={65.700} fill="#e8e9ee" stroke="#2c2c10" />
          </g>
          <Disc x={x} y={y} r={65.700} stroke="#3a1000" strokeWidth="1.200" />
        </g>
      ))}

      <path d="M770 344C790 312 815 298 846 288L838 296C808 308 784 326 764 354Z" fill="#c00a0a" />
      <path d="M925 621C970 628 1025 618 1066 590L1040 590L930 612Z" fill="#8e0000" stroke="#5a0000" />
      <path d="M753.100 433.300L774.800 528.600A196 130.700 -12.500 0 0 1158.200 443.600L1136.500 348.300Z" fill="url(#gr)" stroke="#0a3a00" />
      <Disc x={944.800} y={390.800} r={196.400} fill="#adadad" stroke="#222" />
      <path d="M805.500 371L816.200 419A131 87.400 -12.500 0 0 1073.200 362L1062.500 314Z" fill="url(#rd)" stroke="#300" />
      <Disc x={934} y={342.500} r={131.600} fill="#00ff00" stroke="#053a05" strokeWidth="1.200" />
      <Disc x={934} y={342.500} r={65.700} fill="url(#bore)" stroke="#1c3a05" strokeWidth="1.200" />

      <path d="M957 444L962 462L950 478" stroke="#d8c890" strokeWidth="1.500" />
      <path d="M962 462L984 467" stroke="#e8603a" strokeWidth="1.200" />
      <circle cx="957" cy="444" r="3" fill="#6abf3a" />
      <circle cx="950" cy="478" r="3" fill="#8fd8d8" />
      <circle cx="984" cy="467" r="1.500" fill="#f07050" />

      <g fill="#ffffff" opacity="0.7">
        <text x="595" y="541" fontSize="66" fontWeight="400" fontFamily="'Noto Sans CJK SC', sans-serif">莫西网</text>
        <g fontSize="57" fontFamily="'Liberation Serif', serif">
          <text x="794" y="541">www</text>
          <text x="914" y="541">.</text>
          <text x="941" y="541">3dmox</text>
          <text x="1116" y="541">.</text>
          <text x="1152" y="541">com</text>
        </g>
      </g>
    </svg>
  );
}

/* ---------- status bar ---------- */

function StatusBar() {
  return (
    <footer className="flex h-[34px] shrink-0 items-center border-t border-[#b4b4b4] bg-white pl-[6px] text-[11px] text-[#3f3f3f]">
      <button className="flex h-[22px] w-[22px] items-center justify-center border border-[#b0b0b0] bg-[#e0e0e0]" aria-label="Model tree"><TreeTabIcon /></button>
      <button className="ml-[6px]" aria-label="Browser">
        <Svg w={18}>
          <circle cx="9" cy="9" r="6.500" fill="#3d9cc4" />
          <path d="M4 8c2-4 5-5 8-4-3 1-3 3-2 5s-3 4-4 3-2-2-2-4z" fill="#c5e9f5" />
          <ellipse cx="9" cy="9" rx="10" ry="4" transform="rotate(-45 9 9)" stroke="#2b6d8a" strokeWidth="1.200" />
        </Svg>
      </button>
      <button className="ml-[9px]" aria-label="Full screen">
        <Svg w={17}><defs><linearGradient id="fs" x1="0" y1="0" x2="0" y2="1"><stop stopColor="#fff" /><stop offset="1" stopColor="#c9dbe8" /></linearGradient></defs><rect x=".5" y=".5" width="15" height="15" fill="url(#fs)" stroke="#3c6578" /></Svg>
      </button>
      <div className="ml-[10px] flex h-6 flex-1 items-center gap-[6px] border-l border-[#c4c4c4] pl-[6px]">
        <span className="h-[5px] w-[5px] rounded-full bg-[#355c68]" />
        <span>EXERCISE-122 has been saved.</span>
      </div>
      <div className="flex h-[26px] items-center border-x border-[#c9c9c9] pr-[2px]">
        <div className="ml-1 flex h-[26px] items-center border-l border-[#c9c9c9] pl-[2px]">
          <div className="flex h-6 items-stretch border border-[#b5b5b5]">
            <button className="flex w-[27px] items-center justify-center" aria-label="Find">
              <Svg w={17} h={16}>
                <path d="M4 3h3l1 3h1l1-3h3l3 9v3h-5.500l-1-5h-2l-1 5H1v-3z" fill="#4d4d4d" />
                <path d="M4 6l-2 6M12 6l1 7" stroke="#aaa" strokeWidth="1.500" />
                <path d="M4 1.500h3M10 1.500h3" stroke="#222" strokeWidth="2" />
              </Svg>
            </button>
            <button className="flex w-[14px] items-center justify-center border-l border-[#b5b5b5]" aria-label="Find list"><Caret /></button>
          </div>
        </div>
      </div>
      <div className="relative ml-[90px] flex h-[23px] w-[165px] items-center border border-[#9c9c9c] bg-[#fafafa]">
        <select aria-label="Selection filter" className="h-full w-full appearance-none bg-transparent pl-[7px] outline-none">
          <option>Geometry</option>
        </select>
        <span className="pointer-events-none absolute right-0 flex h-full w-[15px] items-center justify-center border-l border-[#9c9c9c]"><Caret /></span>
      </div>
      <div className="ml-1 mr-[3px] self-end pb-1"><Svg w={11}><path d="M0 11L11 0M4 11l7-7M8 11l3-3" stroke="#b0b0b0" /></Svg></div>
    </footer>
  );
}

export default function App() {
  return (
    <div className="flex h-screen flex-col border-b border-[#2b2b30] bg-[#b9b9b9] px-1 pb-[3px] pt-1 font-['Noto_Sans','Noto_Sans_CJK_SC',sans-serif]">
      <TitleBar />
      <TabBar />
      <Ribbon />
      <div className="flex min-h-0 flex-1">
        <SidePanel />
        <main className="relative flex min-w-0 flex-1 flex-col items-center bg-[#e8e9ee] pt-[7px]">
          <Part />
          <GraphicsToolbar />
        </main>
      </div>
      <StatusBar />
    </div>
  );
}
